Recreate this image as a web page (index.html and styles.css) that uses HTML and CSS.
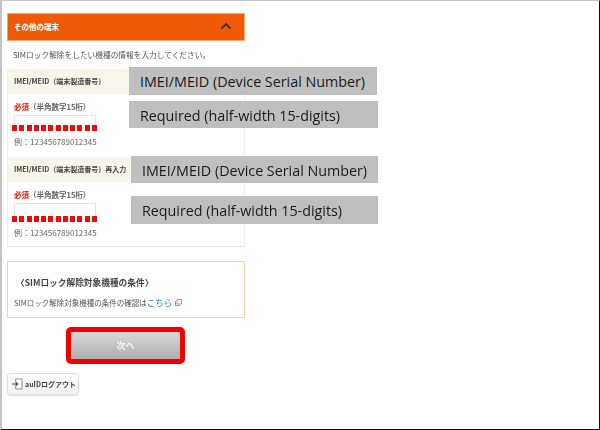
FILE: index.html
```html
<!DOCTYPE html>
<html lang="ja">
<head>
<meta charset="utf-8">
<title>その他の端末</title>
<link rel="stylesheet" href="styles.css">
</head>
<body>
<div class="frame">
  <main class="column">
    <section class="panel">
      <header class="panel-head">
        <span>その他の端末</span>
        <svg class="chevron" width="12" height="8" viewBox="0 0 12 8"><path d="M1.5 6.500 6 2l4.500 4.500" fill="none" stroke="#4a2a10" stroke-width="1.800"/></svg>
      </header>
      <p class="lead">SIMロック解除をしたい機種の情報を入力してください。</p>
      <div class="fields">
        <h2 class="row-head">IMEI/MEID（端末製造番号）</h2>
        <div class="field">
          <div class="req"><b>必須</b>（半角数字15桁）</div>
          <div class="input"><span class="dots"></span></div>
          <div class="eg">例：123456789012345</div>
        </div>
        <h2 class="row-head">IMEI/MEID（端末製造番号）再入力</h2>
        <div class="field field-2">
          <div class="req"><b>必須</b>（半角数字15桁）</div>
          <div class="input"><span class="dots"></span></div>
          <div class="eg">例：123456789012345</div>
        </div>
      </div>
    </section>
    <section class="note">
      <h3>〈SIMロック解除対象機種の条件〉</h3>
      <p>SIMロック解除対象機種の条件の確認は<a>こちら</a><svg class="ext" width="7" height="7" viewBox="0 0 7 7"><path d="M2 .5h4.500V5H2zM.5 2v4.500H5" fill="none" stroke="#e88a45"/></svg></p>
    </section>
    <div class="next-wrap"><button class="next">次へ</button></div>
    <button class="logout">
      <svg width="11" height="12" viewBox="0 0 12 13"><path d="M4 1h7v11H4V8.500M4 4.500V1" fill="none" stroke="#888"/><path d="M0 6.500h6M4 4.500l2.200 2-2.200 2" fill="none" stroke="#444" stroke-width="1.200"/></svg>
      <span>auIDログアウト</span>
    </button>
  </main>
  <div class="tag tag-1">IMEI/MEID (Device Serial Number)</div>
  <div class="tag tag-2">Required (half-width 15-digits)</div>
  <div class="tag tag-3">IMEI/MEID (Device Serial Number)</div>
  <div class="tag tag-4">Required (half-width 15-digits)</div>
</div>
</body>
</html>
```
FILE: styles.css
```css
* { box-sizing: border-box; }
html, body { margin: 0; padding: 0; background: #fff; }
body { font-family: "Noto Sans CJK JP", "Liberation Sans", sans-serif; }
.frame {
  position: relative;
  width: 600px;
  height: 430px;
  overflow: hidden;
  border-top: 1px solid #c4c4c4;
  border-left: 2px solid #c4c4c4;
  border-right: 1px solid #111;
  border-bottom: 1px solid #111;
  padding: 12px 0 0 5px;
}
.column { width: 238px; filter: blur(0.5px); }
.panel-head {
  height: 28px;
  background: #ee5a05;
  border: 1px solid #f3a878;
  color: #fff;
  font-size: 7.500px;
  font-weight: 700;
  display: flex;
  align-items: center;
  justify-content: space-between;
  padding: 0 12px 2px 6px;
}
.lead {
  margin: 0;
  height: 28px;
  padding: 7px 0 0 6px;
  font-size: 7.700px;
  line-height: 14px;
  color: #555;
}
.fields { border: 1px solid #eee; border-top: 0; border-bottom-color: #e6e6e6; height: 178px; }
.row-head {
  margin: 0;
  height: 25px;
  background: #f8f5ea;
  font-size: 7px;
  font-weight: 700;
  line-height: 24px;
  padding-left: 6px;
  color: #444;
  white-space: nowrap;
}
.field { height: 63px; padding: 7px 0 0 6px; }
.field-2 { padding-top: 7px; }
.req { font-size: 7.500px; line-height: 12px; font-weight: 700; color: #666; }
.req b { color: #e8321e; }
.input {
  position: relative;
  width: 82px;
  height: 16px;
  margin-top: 2px;
  border: 1px solid #e4e4e4;
  border-bottom: 0;
}
.dots {
  position: absolute;
  left: -3px;
  bottom: 0;
  width: 85px;
  height: 6px;
  background: repeating-linear-gradient(90deg, #ee0a0a 0 5px, transparent 5px 7.270px);
}
.field-2 .input { height: 19px; }
.eg { margin-top: 5px; font-size: 8px; line-height: 12px; color: #666; }
.note {
  margin-top: 14px;
  height: 57px;
  border: 1px solid #f4d6ae;
  padding: 14px 0 0 6px;
  color: #444;
}
.note h3 { margin: 0; font-size: 8.700px; line-height: 14px; font-weight: 700; padding-left: 2px; }
.note p { margin: 6px 0 0; font-size: 7.500px; line-height: 12px; color: #555; white-space: nowrap; }
.note a { color: #1b78c8; font-size: 8.500px; }
.ext { margin-left: 3px; }
.next-wrap { margin-top: 9px; padding-left: 59px; }
.next {
  display: block;
  width: 119px;
  height: 37px;
  border: 5px solid #f00000;
  border-radius: 5px;
  background: linear-gradient(#d8d8d8, #aeaeae);
  color: #f4f4f4;
  font: 700 9px "Noto Sans CJK JP", sans-serif;
  padding: 0;
}
.logout {
  display: flex;
  align-items: center;
  gap: 2px;
  width: 72px;
  height: 22px;
  margin-top: 9px;
  padding: 0 0 0 4px;
  background: linear-gradient(#fff, #f2f2f2);
  border: 1px solid #ddd;
  border-radius: 3px;
  box-shadow: 0 1px 1px #ddd;
  color: #444;
  font: 700 7px "Noto Sans CJK JP", sans-serif;
  white-space: nowrap;
}
.tag {
  position: absolute;
  background: #bfbfbf;
  color: #1a1a1a;
  font-family: "Open Sans", sans-serif;
  font-size: 14.300px;
  display: flex;
  align-items: center;
  white-space: nowrap;
  padding-left: 11px;
}
.tag-1 { left: 127px; top: 66px; width: 248px; height: 28px; }
.tag-2 { left: 127px; top: 100px; width: 249px; height: 27px; padding-top: 2px; }
.tag-3 { left: 129px; top: 155px; width: 247px; height: 27px; padding-top: 2px; }
.tag-4 { left: 129px; top: 195px; width: 247px; height: 28px; }
```
